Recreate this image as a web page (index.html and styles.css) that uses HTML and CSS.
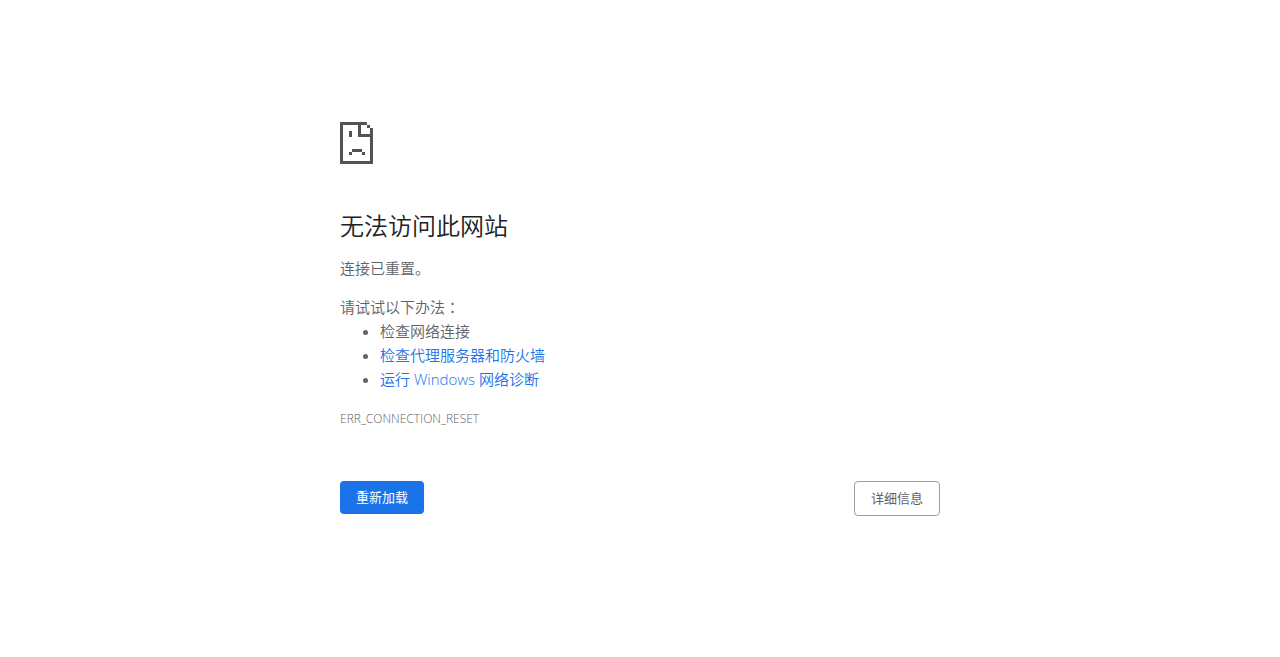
FILE: index.html
```html
<!DOCTYPE html>
<html lang="zh-CN">
<head>
    <meta charset="UTF-8">
    <meta name="viewport" content="width=device-width, initial-scale=1.0">
    <title>无法访问此网站</title>
    <link rel="stylesheet" href="styles.css">
</head>
<body>
    <main class="interstitial">
        <!-- Sad page icon -->
        <svg class="icon" viewBox="0 0 33 42" shape-rendering="crispEdges" aria-hidden="true">
            <path fill="#535353" fill-rule="evenodd" d="M0 0H27V3H21V12H33V42H0ZM3 3V39H30V15H18V3ZM27 3H30V6H27ZM30 6H33V12H30ZM9 9H12V15H9ZM12 27H22V30H12ZM9 30H12V33H9ZM22 30H25V33H22Z"/>
        </svg>
        <h1>无法访问此网站</h1>
        <p>连接已重置。</p>
        <div class="suggestions">
            <p>请试试以下办法<span class="colon" lang="zh-TW">：</span></p>
            <ul>
                <li>检查网络连接</li>
                <li><a href="#proxy">检查代理服务器和防火墙</a></li>
                <li><a href="#diagnose">运行 Windows 网络诊断</a></li>
            </ul>
        </div>
        <p class="error-code">ERR_CONNECTION_RESET</p>
        <div class="buttons">
            <button type="button" class="reload">重新加载</button>
            <button type="button" class="details">详细信息</button>
        </div>
    </main>
</body>
</html>
```
FILE: styles.css
```css
body {
    margin: 0;
    background-color: #fff;
    color: #5f6368;
    font-family: "Open Sans", "Noto Sans CJK SC", sans-serif;
    font-size: 15px;
    font-weight: 350;
    line-height: 24px;
}

.interstitial {
    max-width: 600px;
    margin: 0 auto;
    padding-top: 122px;
}

.icon {
    display: block;
    width: 33px;
    height: 42px;
    margin-bottom: 47px;
}

h1 {
    margin: 0 0 15px;
    color: #202124;
    font-size: 24px;
    font-weight: 350;
    line-height: 30px;
}

p {
    margin: 0 0 15px;
}

.suggestions {
    margin-bottom: 16px;
}

.suggestions p {
    margin: 0;
}

.colon {
    font-family: "Noto Sans CJK TC", sans-serif;
}

ul {
    margin: 0;
    padding-left: 40px;
}

a {
    color: #1a73e8;
    text-decoration: none;
}

.error-code {
    margin-bottom: 50px;
    font-size: 12px;
}

.buttons {
    display: flex;
    justify-content: space-between;
    align-items: flex-start;
}

button {
    padding: 8px 16px;
    border: none;
    border-radius: 4px;
    font-family: inherit;
    font-size: 13px;
    line-height: 17px;
    cursor: pointer;
}

.reload {
    background-color: #1a73e8;
    color: #fff;
}

.details {
    border: 1px solid #9aa0a6;
    background-color: #fff;
    color: #5f6368;
}
```
